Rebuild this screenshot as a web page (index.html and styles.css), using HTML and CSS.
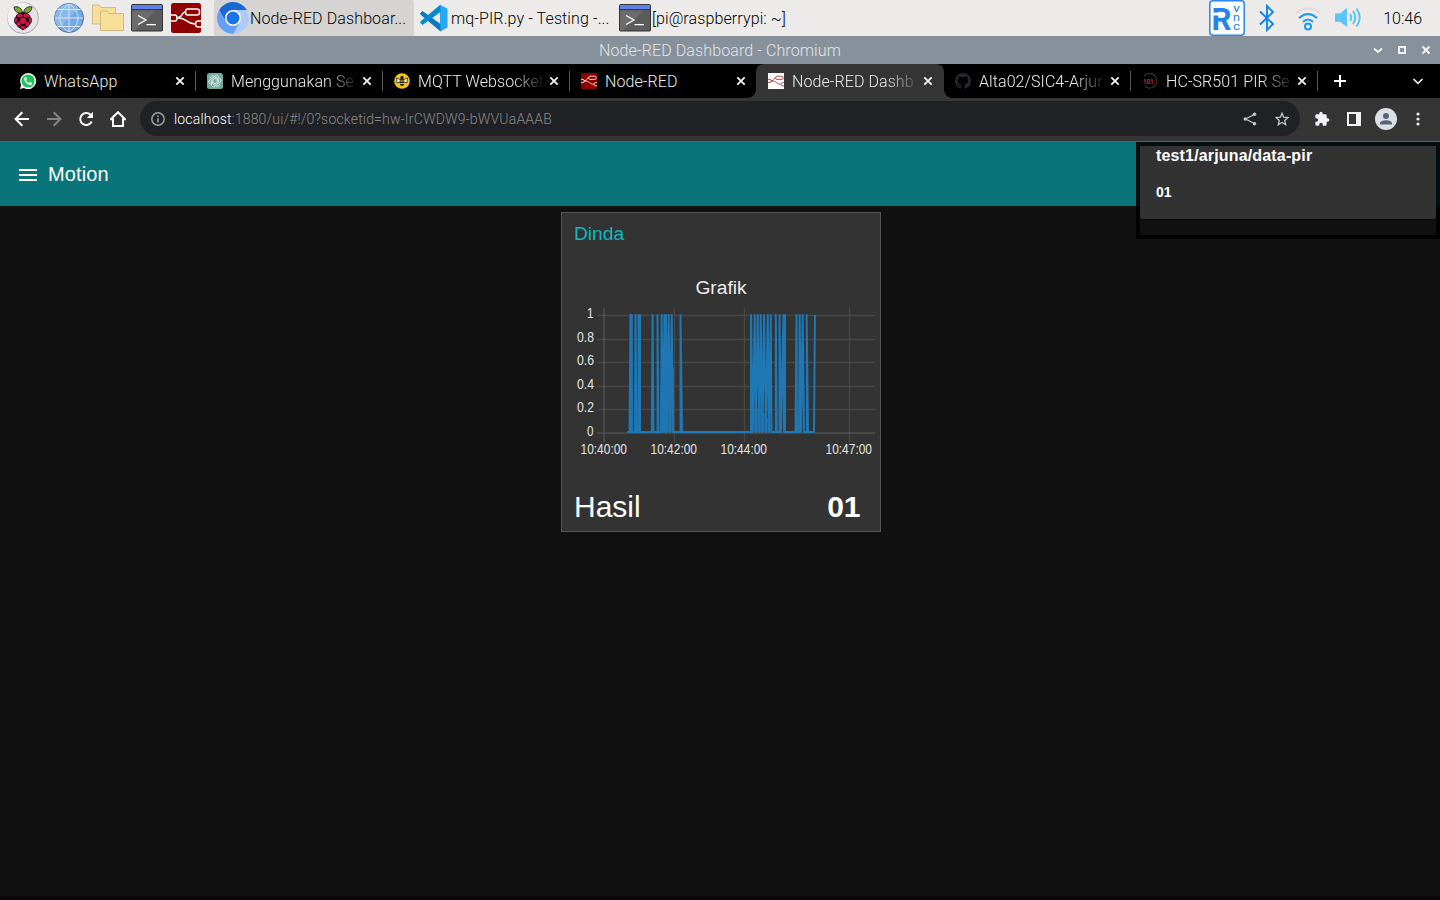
FILE: index.html
```html
<!DOCTYPE html>
<html lang="en">
<head>
<meta charset="utf-8">
<title>Node-RED Dashboard</title>
<link rel="stylesheet" href="styles.css">
</head>
<body>
<svg class="defs" width="0" height="0">
  <symbol id="terminal" viewBox="0 0 32 28">
    <rect x=".5" y=".5" width="31" height="26.500" rx="1" fill="#5b5b5b" stroke="#333"/>
    <path d="M1 6H25L4 26.500H1Z" fill="#6c6c6c"/>
    <rect x="1" y="1" width="30" height="4.500" fill="#6080ea"/>
    <path d="M0 5.700H32" stroke="#2b2f45"/>
    <path d="M7 11.500L15 16L7 20.500M15.500 20.700H25" fill="none" stroke="#fff" stroke-width="1.300"/>
  </symbol>
  <symbol id="flow" viewBox="0 0 30 30">
    <g fill="none" stroke="currentColor" stroke-width="1.500">
      <rect x="14.500" y="6" width="14" height="6" rx="2.500"/>
      <path d="M0 12H4Q6 12 6 15T4 18H0M6 15C12 15 10 9 14.500 9M6 15C16 14 15 21 24 21"/>
      <path d="M30 18H27Q24.500 18 24.500 21T27 24H30"/>
    </g>
  </symbol>
  <symbol id="close" viewBox="0 0 16 16"><path d="M4.300 4.300L11.700 11.700M11.700 4.300L4.300 11.700" stroke="#f2f2f2" stroke-width="1.900"/></symbol>
</svg>

<header class="panel">
  <div class="launchers">
    <svg width="32" height="32" viewBox="0 0 32 32">
      <circle cx="16" cy="16" r="15.500" fill="#e3e3e5" stroke="#a9abae"/>
      <path d="M3 24A15 15 0 0 1 25 4Z" fill="#f1f1f1"/>
      <path d="M15.500 11C10 12 7.500 9 7 5C11 4 15 6 15.500 11ZM16.500 11C22 12 24.500 9 25 5C21 4 17 6 16.500 11Z" fill="#75a928" stroke="#222" stroke-width=".9"/>
      <path d="M16 10.500C20 10 23 12 23.500 15C26 17 25 21 22.800 22.500C21.500 25.500 19 26.500 16 28.300C13 26.500 10.500 25.500 9.200 22.500C7 21 6 17 8.500 15C9 12 12 10 16 10.500Z" fill="#17060c"/>
      <g fill="#c9154a"><circle cx="16" cy="18.800" r="3.100"/><ellipse cx="12.800" cy="13.500" rx="2.900" ry="2"/><ellipse cx="19.200" cy="13.500" rx="2.900" ry="2"/><ellipse cx="8.800" cy="18" rx="1.400" ry="2.500"/><ellipse cx="23.200" cy="18" rx="1.400" ry="2.500"/><circle cx="11.600" cy="22" r="2.200"/><circle cx="20.400" cy="22" r="2.200"/><ellipse cx="16" cy="25.400" rx="2.500" ry="1.700"/></g>
    </svg>
    <svg class="globe" width="32" height="32" viewBox="0 0 32 32">
      <circle cx="16" cy="16" r="14.500" fill="#76a9e4" stroke="#506f98"/>
      <path d="M6 26A14 14 0 0 1 26 6Z" fill="#8ab7ec"/>
      <path d="M16 2V30M2 16H30M4.500 7.500H27.500M4.500 24.500H27.500M16 2C4 9 4 23 16 30M16 2C28 9 28 23 16 30" fill="none" stroke="#d7e7f8"/>
    </svg>
    <svg width="32" height="28" viewBox="0 0 32 28" fill="#f7df9a" stroke="#cfb47c" stroke-width=".9">
      <path d="M.5 1H7L9 3.500H23.500V20H.5Z"/><path d="M8.500 7H15L17 9.500H31.500V26.500H8.500Z"/>
    </svg>
    <svg width="32" height="28"><use href="#terminal"/></svg>
    <svg class="nr" width="30" height="30"><rect width="30" height="30" rx="2.500" fill="#8f0000"/><use href="#flow"/></svg>
  </div>
  <nav class="tasks">
    <div class="task active">
      <svg width="32" height="32" viewBox="0 0 32 32">
        <circle cx="16" cy="16" r="16" fill="#aecbfa"/>
        <path d="M2.200 8A16 16 0 0 1 29.800 8H16L9 20Z" fill="#1967d2"/>
        <path d="M2.200 8A16 16 0 0 0 16 32L23 20L16 23L9 20Z" fill="#669df6"/>
        <circle cx="16" cy="16" r="8" fill="#fff"/><circle cx="16" cy="16" r="6.500" fill="#1a73e8"/>
      </svg><span>Node-RED Dashboar...</span>
    </div>
    <div class="task code">
      <svg width="28" height="28" viewBox="0 0 28 28">
        <path d="M20 1L27.500 4.500V23.500L20 27.500Z" fill="#29a9f2"/>
        <path d="M0 9.500L2.500 7L20.500 20V27.500L1 11Z" fill="#0879bd"/>
        <path d="M0 18.500L2.500 21L20.500 8V.5L1 17Z" fill="#078ad2"/>
      </svg><span>mq-PIR.py - Testing -...</span>
    </div>
    <div class="task term"><svg width="32" height="28"><use href="#terminal"/></svg><span>[pi@raspberrypi: ~]</span></div>
  </nav>
  <div class="tray">
    <svg class="vnc" width="36" height="36" viewBox="0 0 36 36">
      <rect x=".8" y=".8" width="34.400" height="34.400" rx="3" fill="#fff" stroke="#2d86ea" stroke-width="1.500"/>
      <text x="2.500" y="29.500" class="vnc-r" textLength="20" lengthAdjust="spacingAndGlyphs">R</text>
      <path d="M3 12.500H10V15.500H3Z" fill="#fff"/>
      <g class="vnc-s"><text x="24" y="11.500" textLength="7" lengthAdjust="spacingAndGlyphs">v</text><text x="24" y="20.500" textLength="7" lengthAdjust="spacingAndGlyphs">n</text><text x="24" y="29.500" textLength="7" lengthAdjust="spacingAndGlyphs">c</text></g>
    </svg>
    <svg class="bt" width="16" height="28" viewBox="0 0 16 28"><path d="M1 7.500L14 20L8 26V2L14 8L1 20.500" fill="none" stroke="#0a84f5" stroke-width="1.900"/></svg>
    <svg class="wifi" width="28" height="24" viewBox="0 0 28 24" fill="none" stroke="#159bf3" stroke-width="2">
      <path d="M2 6Q14 -3 26 6" stroke="#dddbd9"/><path d="M5 11Q14 3 23 11M9 15Q14 10 19 15"/><circle cx="14" cy="19.500" r="3"/>
    </svg>
    <svg class="vol" width="28" height="22" viewBox="0 0 28 22">
      <path d="M1 6.500H6L13 1V20L6 14.800H1Z" fill="#5bc4fa"/>
      <path d="M16 7Q18.500 10.500 16 14M19 4Q23.500 10.500 19 17M22.500 1.500Q29 10.500 22.500 19.500" fill="none" stroke="#5bc4fa" stroke-width="2"/>
    </svg>
    <time>10:46</time>
  </div>
</header>

<div class="titlebar">
  <span>Node-RED Dashboard - Chromium</span>
  <svg width="60" height="12" viewBox="0 0 60 12" fill="none" stroke="#f4f4f4" stroke-width="2"><path d="M2 4.500L6 8L10 4.500"/><rect x="27" y="3" width="6" height="6"/><path d="M50.500 2.500L57.500 9.500M57.500 2.500L50.500 9.500"/></svg>
</div>

<div class="tabs">
  <div class="tab first">
    <svg width="16" height="16" viewBox="0 0 16 16"><path d="M0 16L1.200 12A8 8 0 1 1 4 14.900Z" fill="#fff"/><circle cx="8" cy="8" r="6.600" fill="#20c45a"/><path d="M5 4C3.500 6 4.500 8 6 9.800C8 11.800 10.500 12.700 12 11L11.500 9.500L10 9L9 10C7.700 9.500 6.600 8.400 6 7L7 6L6 4Z" fill="#fff"/></svg>
    <span>WhatsApp</span><svg width="16" height="16"><use href="#close"/></svg>
  </div>
  <div class="tab">
    <svg width="16" height="16" viewBox="0 0 16 16"><rect width="16" height="16" rx="2.500" fill="#74aa9c"/><g fill="none" stroke="#eef7f4" stroke-width=".8"><g id="p"><path d="M8 2.300C10 1.500 12 3 11.700 5V8.500L8.500 10.300"/></g><use href="#p" transform="rotate(60 8 8)"/><use href="#p" transform="rotate(120 8 8)"/><use href="#p" transform="rotate(180 8 8)"/><use href="#p" transform="rotate(240 8 8)"/><use href="#p" transform="rotate(300 8 8)"/></g></svg>
    <span class="fade">Menggunakan Se</span><svg width="16" height="16"><use href="#close"/></svg>
  </div>
  <div class="tab">
    <svg width="16" height="16" viewBox="0 0 16 16"><circle cx="8" cy="8" r="7.800" fill="#f9c311"/><path d="M2.500 5L7 7L6 9L3 10ZM13.500 5L9 7L10 9L13 10Z" fill="#fff" stroke="#222" stroke-width=".8"/><ellipse cx="8" cy="9" rx="2.300" ry="4" fill="#222"/><circle cx="8" cy="4.500" r="1.700" fill="#222"/><path d="M5.500 8H10.500M5.800 10.500H10.200" stroke="#f9c311" stroke-width=".9"/></svg>
    <span class="fade">MQTT Websocket</span><svg width="16" height="16"><use href="#close"/></svg>
  </div>
  <div class="tab before">
    <svg class="nr" width="16" height="16"><rect width="16" height="16" rx="1.500" fill="#8f0000"/><use href="#flow"/></svg>
    <span>Node-RED</span><svg width="16" height="16"><use href="#close"/></svg>
  </div>
  <div class="tab current">
    <svg class="nrw" width="16" height="16"><rect width="16" height="16" fill="#fff"/><use href="#flow"/></svg>
    <span class="fade">Node-RED Dashb</span><svg width="16" height="16"><use href="#close"/></svg>
  </div>
  <div class="tab after">
    <svg width="16" height="16" viewBox="0 0 16 16"><path fill="#24292f" d="M8 0C3.600 0 0 3.600 0 8c0 3.500 2.300 6.500 5.500 7.600.4.100.5-.2.500-.4v-1.500c-2.200.5-2.700-.9-2.700-.9-.4-.9-.9-1.200-.9-1.200-.7-.5.100-.5.100-.5.800.1 1.200.8 1.200.8.700 1.200 1.900.9 2.300.7.100-.5.300-.9.500-1.100C4.700 11.300 2.900 10.600 2.900 7.500c0-.9.300-1.600.8-2.100-.1-.2-.4-1 .1-2.100 0 0 .7-.2 2.200.8a7.700 7.700 0 0 1 4 0c1.500-1 2.200-.8 2.200-.8.500 1.100.2 1.900.1 2.100.5.600.8 1.300.8 2.100 0 3.100-1.900 3.800-3.600 4 .3.200.5.700.5 1.500v2.200c0 .2.100.5.500.4A8 8 0 0 0 16 8c0-4.400-3.600-8-8-8Z"/></svg>
    <span class="fade">Alta02/SIC4-Arjun</span><svg width="16" height="16"><use href="#close"/></svg>
  </div>
  <div class="tab">
    <svg width="16" height="16" viewBox="0 0 16 16"><path d="M2 3A7.300 7.300 0 1 1 3 13.500" fill="none" stroke="#423033" stroke-width="1.200"/><text class="f101" x="1" y="10.600" textLength="10.500" lengthAdjust="spacingAndGlyphs">101</text></svg>
    <span class="fade">HC-SR501 PIR Se</span><svg width="16" height="16"><use href="#close"/></svg>
  </div>
  <svg class="plus" width="14" height="14" viewBox="0 0 14 14"><path d="M7 1V13M1 7H13" stroke="#fff" stroke-width="2"/></svg>
  <svg class="more" width="12" height="12" viewBox="0 0 12 12"><path d="M1.500 4L6 8.300L10.500 4" fill="none" stroke="#eee" stroke-width="1.700"/></svg>
</div>

<div class="toolbar">
  <div class="navs">
    <svg width="16" height="16" viewBox="0 0 16 16" fill="none" stroke="#fff" stroke-width="2"><path d="M15 8H2M8.300 1.200L1.600 8L8.300 14.800"/></svg>
    <svg width="16" height="16" viewBox="0 0 16 16" fill="none" stroke="#858585" stroke-width="2"><path d="M1 8H14M7.700 1.200L14.400 8L7.700 14.800"/></svg>
    <svg width="16" height="16" viewBox="0 0 16 16"><path d="M13.700 10.500A6 6 0 1 1 12.500 3.800L14 5.500" fill="none" stroke="#fff" stroke-width="2"/><path d="M15 .8V7H8.800Z" fill="#fff"/></svg>
    <svg width="16" height="16" viewBox="0 0 16 16"><path d="M.8 8.300L8 1.200L15.200 8.300H13V15H3V8.300Z" fill="none" stroke="#fff" stroke-width="2"/></svg>
  </div>
  <div class="address">
    <svg width="14" height="14" viewBox="0 0 14 14"><circle cx="7" cy="7" r="6.200" fill="none" stroke="#9b9da1" stroke-width="1.500"/><path d="M7 6.300V10.500M7 3.400V5" stroke="#9b9da1" stroke-width="1.600"/></svg>
    <span class="url"><b>localhost</b>:1880/ui/#!/0?socketid=hw-IrCWDW9-bWVUaAAAB</span>
    <svg class="share" width="14" height="14" viewBox="0 0 14 14" fill="#c4c5c7"><path d="M11.500 2.500L2.500 7L11.500 11.500" fill="none" stroke="#c4c5c7" stroke-width="1.300"/><circle cx="11.500" cy="2.300" r="1.800"/><circle cx="2.300" cy="7" r="1.800"/><circle cx="11.500" cy="11.700" r="1.800"/></svg>
    <svg width="14" height="14" viewBox="0 0 14 14"><path d="M7 1.200L8.600 5.200L13 5.500L9.700 8.400L10.700 12.700L7 10.400L3.300 12.700L4.300 8.400L1 5.500L5.400 5.200Z" fill="none" stroke="#c4c5c7" stroke-width="1.300"/></svg>
  </div>
  <svg class="puzzle" width="16" height="16" viewBox="0 0 24 24" fill="#f2f2f5"><path d="M20.500 11H19V7c0-1.100-.9-2-2-2h-4V3.500a2.500 2.500 0 0 0-5 0V5H4c-1.100 0-2 .9-2 2v3.800h1.500a2.700 2.700 0 0 1 0 5.400H2V20c0 1.100.9 2 2 2h3.800v-1.500a2.700 2.700 0 0 1 5.400 0V22H17c1.100 0 2-.9 2-2v-4h1.500a2.500 2.500 0 0 0 0-5z"/></svg>
  <svg class="side" width="14" height="14" viewBox="0 0 14 14"><path d="M0 0H14V14H0ZM2 2V12H9V2Z" fill="#f2f2f5" fill-rule="evenodd"/></svg>
  <svg width="22" height="22" viewBox="0 0 22 22"><circle cx="11" cy="11" r="11" fill="#dcdfe5"/><circle cx="11" cy="8" r="3" fill="#59627a"/><path d="M5 16.500V15Q6 12.300 11 12.300T17 15V16.500Z" fill="#59627a"/></svg>
  <svg class="dots" width="4" height="14" viewBox="0 0 4 14" fill="#eee"><circle cx="2" cy="2" r="1.600"/><circle cx="2" cy="7" r="1.600"/><circle cx="2" cy="12" r="1.600"/></svg>
</div>

<main class="page">
  <div class="appbar">
    <svg width="18" height="12" viewBox="0 0 18 12"><path d="M0 1H18M0 6H18M0 11H18" stroke="#fff" stroke-width="2"/></svg>
    <h1>Motion</h1>
  </div>
  <section class="card">
    <h2>Dinda</h2>
    <h3>Grafik</h3>
    <svg class="chart" width="318" height="164" viewBox="562 300 318 164">
      <g stroke="#fff" stroke-opacity=".1" stroke-width="1.300">
        <path d="M597 315.500H875M597 339.500H875M597 362.500H875M597 386.500H875M597 409.500H875M674.500 308V442M744.500 308V442M849.500 308V442"/>
        <path d="M597 433H875M604 308V442" stroke-opacity=".14" stroke-width="1.500"/>
      </g>
      <path class="series" d="M627 432H629.500L630.500 315V432L631.800 315L632 432H635L635.500 315L636.500 432H638.500L638.500 315L639.500 432L640 315V432H651.800L652.600 315L653.500 432H657.500V315L658.600 432H661L661.700 315L663 432L664.500 315L665 432L666 315L667 432L668.700 315L670 432L671.700 315L673 432H680.500V315L682 432H751V315L753 432L754.700 315L756 432L757.700 315L759.500 432L760.700 315L762.500 432L764 315L766 432L767.700 315L769 432L770.700 315L771.500 432H775.800V315L776.800 432H779.500V315L781 432L783.500 315L784 432L785 315V432H795.500L796.500 315L797 432H799L799.700 315L801 432L802.700 315L804 432H807L806.700 315L808 432H814L815 315"/>
      <path d="M664 368L674 368V432H661ZM750.500 409L762 409L772 426V432H750.500Z" fill="#1f77b4" fill-opacity=".75"/>
      <g class="labels">
        <text x="587" y="318" textLength="6.500" lengthAdjust="spacingAndGlyphs">1</text>
        <text x="577" y="342" textLength="17" lengthAdjust="spacingAndGlyphs">0.8</text>
        <text x="577" y="365" textLength="17" lengthAdjust="spacingAndGlyphs">0.6</text>
        <text x="577" y="389" textLength="17" lengthAdjust="spacingAndGlyphs">0.4</text>
        <text x="577" y="412" textLength="17" lengthAdjust="spacingAndGlyphs">0.2</text>
        <text x="587" y="436" textLength="6.500" lengthAdjust="spacingAndGlyphs">0</text>
        <text x="580.500" y="454" textLength="46.500" lengthAdjust="spacingAndGlyphs">10:40:00</text>
        <text x="650.500" y="454" textLength="46.500" lengthAdjust="spacingAndGlyphs">10:42:00</text>
        <text x="720.500" y="454" textLength="46.500" lengthAdjust="spacingAndGlyphs">10:44:00</text>
        <text x="825.500" y="454" textLength="46.500" lengthAdjust="spacingAndGlyphs">10:47:00</text>
      </g>
    </svg>
    <div class="result"><span>Hasil</span><strong>01</strong></div>
  </section>
  <aside class="toast"><div class="toast-body"><h4>test1/arjuna/data-pir</h4><p>01</p></div></aside>
</main>
</body>
</html>
```
FILE: styles.css
```css
* { box-sizing: border-box; }
body { margin: 0; width: 1440px; height: 900px; overflow: hidden; display: flex; flex-direction: column; background: #111; font-family: Roboto, sans-serif; font-weight: 300; }
svg { display: block; flex: none; }
.defs { position: absolute; }
h1, h2, h3, h4, p { margin: 0; font-weight: 400; }

.panel { height: 36px; flex: none; display: flex; background: #edebe9; color: #000; font-size: 16px; white-space: nowrap; }
.launchers { width: 214px; padding-left: 7px; display: flex; align-items: center; gap: 7px; }
.launchers .globe { margin-left: 7px; }
.nr { color: #fff; }
.nrw { color: #a02525; }
.launchers .nr { margin-left: 1px; }
.tasks { display: flex; }
.task { display: flex; align-items: center; }
.task span { font-size: 16px; font-weight: 300; letter-spacing: .11px; }
.active { width: 200px; padding-left: 3px; gap: 1px; background: #d5d4d2; border-radius: 2px; }
.code { width: 204px; padding-left: 6px; gap: 3px; }
.term { padding-left: 1px; gap: 1px; }
.tray { margin-left: auto; padding-right: 18px; display: flex; align-items: center; }
.vnc-r { font: 700 31px Roboto, sans-serif; fill: #2484ea; }
.vnc-s { font: 400 11px Roboto, sans-serif; fill: #2484ea; }
.bt { margin-left: 14px; }
.wifi { margin: 2px 0 0 19px; }
.vol { margin-left: 12px; }
.tray time { margin-left: 21px; }

.titlebar { height: 28px; flex: none; display: grid; grid-template-columns: 1fr auto 1fr; align-items: center; background: #87919b; color: #e3e5e8; font-size: 16px; letter-spacing: .11px; }
.titlebar span { grid-column: 2; }
.titlebar svg { justify-self: end; margin-right: 8px; }

.tabs { height: 34px; flex: none; padding-left: 8px; display: flex; background: #000; }
.tab { width: 187px; flex: none; display: flex; align-items: center; padding-left: 11px; gap: 8px; color: #ececec; font-size: 16px; letter-spacing: .08px; background: linear-gradient(#555, #555) right 0 top 7px / 1px 20px no-repeat; }
.tab span { width: 124px; margin-right: -4px; flex: none; white-space: nowrap; }
.tab .fade { -webkit-mask-image: linear-gradient(90deg, #000 76%, rgba(0, 0, 0, .12) 100%); mask-image: linear-gradient(90deg, #000 76%, rgba(0, 0, 0, .12) 100%); }
.tab.first { width: 188px; padding-left: 12px; }
.tab.before { width: 186px; background: radial-gradient(circle at 0 0, transparent 7.500px, #353535 8px) right bottom / 8px 8px no-repeat; }
.tab.current { width: 188px; padding-left: 12px; background: #353535; border-radius: 8px 8px 0 0; }
.tab.after { background: radial-gradient(circle at 100% 0, transparent 7.500px, #353535 8px) 0 bottom / 8px 8px no-repeat, linear-gradient(#555, #555) right 0 top 7px / 1px 20px no-repeat; }
.f101 { font: 700 7px Roboto, sans-serif; fill: #dd2929; }
.plus { margin: 10px 0 0 15px; }
.more { margin: 11px 16px 0 auto; }

.toolbar { height: 44px; flex: none; display: flex; align-items: center; padding: 0 20px 2px 14px; background: #353535; border-bottom: 1px solid #5c5e60; }
.navs { display: flex; gap: 16px; width: 126px; }
.address { width: 1160px; height: 35px; margin-right: 14px; padding: 0 11px; border-radius: 18px; display: flex; align-items: center; background: #202124; }
.url { margin-left: 9px; font-size: 14px; color: #898a8c; letter-spacing: .18px; }
.url b { font-weight: 300; color: #fff; }
.share { margin: 0 18px 0 auto; }
.puzzle { margin-right: 17px; }
.side { margin-right: 14px; }
.dots { margin-left: 19px; }

.page { flex: 1; position: relative; border-bottom: 4px solid #0b0708; background: #111; font-family: "Liberation Sans", Arial, sans-serif; font-weight: 400; }
.appbar { height: 64px; padding-left: 19px; display: flex; align-items: center; gap: 11px; background: #097479; color: #fff; }
.appbar svg { margin-top: 2px; }
.appbar h1 { font-size: 20px; letter-spacing: .1px; }
.card { width: 320px; height: 320px; margin: 6px 0 0 561px; border: 1px solid #555; background: #333; display: flex; flex-direction: column; }
.card h2 { height: 42px; padding-left: 12px; color: #0eb8c0; font-size: 19.200px; line-height: 42px; }
.card h3 { height: 45px; padding-top: 21px; text-align: center; color: #eee; font-size: 19.200px; line-height: 24px; }
.chart { overflow: visible; }
.series { fill: none; stroke: #1f77b4; stroke-width: 2; stroke-linejoin: round; }
.labels { fill: #e4e4e4; font: 14.500px "Liberation Sans", Arial, sans-serif; }
.result { flex: 1; display: flex; justify-content: space-between; align-items: center; padding: 19px 19.500px 0 12px; color: #fff; font-size: 30px; }
.toast { position: absolute; top: 0; right: 0; width: 304px; height: 97px; border: 4px solid rgba(0, 0, 0, .87); background: #111; background-clip: padding-box; }
.toast-body { height: 73px; padding: 0 16px; border-radius: 0 0 2px 2px; background: #323232; color: #fff; box-shadow: 0 1px 2px #0c0c0c; font-weight: 700; }
.toast h4 { font-size: 16px; font-weight: 700; line-height: 20px; letter-spacing: .16px; }
.toast p { padding-top: 18px; font-size: 14px; font-weight: 700; line-height: 17px; }
```
